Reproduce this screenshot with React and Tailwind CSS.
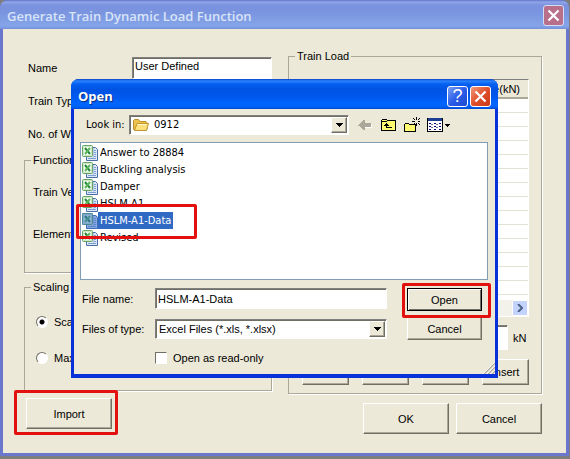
const files = ['Answer to 28884', 'Buckling analysis', 'Damper', 'HSLM-A1', 'HSLM-A1-Data', 'Revised']

const raised = 'border border-t-white border-l-white border-r-[#716f64] border-b-[#716f64] shadow-[inset_-1px_-1px_0_#aca899]'
const sunken = 'border border-t-[#808080] border-l-[#808080] border-r-white border-b-white bg-white shadow-[inset_1px_1px_0_#716f64]'

function ExcelIcon({ selected }) {
  return (
    <svg className="h-4 w-4 shrink-0" viewBox="0 0 16 16" aria-hidden="true">
      <path d="M4.5 2.5h9l2 2v11h-11z" fill="#dce8f8" stroke="#4a6ea8" />
      <path d="M12 5.500h2M12 7.500h2M12 9.500h2M12 11.500h2M6 13.500h8" stroke="#7f9fd2" />
      <path d="M11.500 3v10" stroke="#b4c9ea" />
      <rect x="0.5" y="0.5" width="10" height="11" rx="1" fill="#cfe8c8" stroke="#67a566" />
      <rect x="2" y="2" width="7" height="8" fill="#f4fbf1" />
      <path d="M3 3l5 6" stroke="#23883a" strokeWidth="2" />
      <path d="M8 3l-5 6" stroke="#5cb75f" strokeWidth="2" />
      {selected && <path d="M0 0h11v2h3l2 2v12H4v-4H0z" fill="#316ac5" fillOpacity="0.5" />}
    </svg>
  )
}

function FolderIcon() {
  return (
    <svg className="h-4 w-4" viewBox="0 0 16 16" aria-hidden="true">
      <path d="M.5 12.500v-9l1-1h4l1.500 2h6l1 1v7z" fill="#eec34c" stroke="#b98f2c" />
      <path d="M1.500 13.500L4 6.500h11.500l-2 7z" fill="#fddf7c" stroke="#c09530" />
      <path d="M4.500 7.500h9.500" stroke="#fff6c4" />
    </svg>
  )
}

function BackIcon() {
  return (
    <svg className="h-4 w-4" viewBox="0 0 16 16" shapeRendering="crispEdges" aria-hidden="true">
      <path d="M2 9h1v1h1v1h1v1h1v1h1v-2h7V7h-1v3H6v2H5v-1H4v-1H3V9z" fill="#fff" />
      <path d="M0 8h1V7h1V6h1V5h1V4h1V3h2v3h6v4H7v3H5v-1H4v-1H3v-1H2V9H0z" fill="#aca899" />
    </svg>
  )
}

function UpIcon() {
  return (
    <svg className="h-4 w-4" viewBox="0 0 16 16" shapeRendering="crispEdges" aria-hidden="true">
      <path d="M.5 13.500v-10l1-1h4l1 1h8v10z" fill="#fffa70" stroke="#000" />
      <path d="M1 4.500h5" stroke="#000" />
      <path d="M5 6h1v1h1v1h1v1H6v1h5v1H5V9H3V8h1V7h1z" fill="#000" />
    </svg>
  )
}

function NewFolderIcon() {
  return (
    <svg className="h-4 w-4" viewBox="0 0 16 16" shapeRendering="crispEdges" aria-hidden="true">
      <path d="M.5 14.500v-7l1-1h3l1 1h6v7z" fill="#fffa70" stroke="#000" />
      <path d="M12 0h1v3h-1zM12 6h1v3h-1zM8 4h3v1H8zM14 4h2v1h-2zM9 1h1v1H9zM10 2h1v1h-1zM15 1h1v1h-1zM14 2h1v1h-1zM14 6h1v1h-1zM15 7h1v1h-1zM10 6h1v1h-1z" fill="#000" />
    </svg>
  )
}

function ViewsIcon() {
  return (
    <svg className="h-4 w-6" viewBox="0 0 24 16" shapeRendering="crispEdges" aria-hidden="true">
      <path d="M.5 1.500h15v13H.5z" fill="#fff" stroke="#000" />
      <path d="M1 1h14v3H1z" fill="#1c3f94" />
      <path d="M2 6h2v1H2zM7 6h2v1H7zM12 6h2v1h-2zM2 9h2v1H2zM7 9h2v1H7zM12 9h2v1h-2zM2 12h2v1H2zM7 12h2v1H7zM12 12h2v1h-2z" fill="#000080" />
      <path d="M4 7h2v1H4zM9 7h2v1H9zM4 10h2v1H4zM9 10h2v1H9z" fill="#707090" />
      <path d="M18 7h5v1h-1v1h-1v1h-1V9h-1V8h-1z" fill="#000" />
    </svg>
  )
}

function CloseIcon() {
  return (
    <svg className="h-[19px] w-[19px]" viewBox="0 0 19 19" aria-hidden="true">
      <path d="M4.500 4.500l10 10M14.500 4.500l-10 10" stroke="#fff" strokeWidth="2.200" />
    </svg>
  )
}

function Highlight({ className }) {
  return <span className={`pointer-events-none absolute z-10 rounded-xs border-3 border-[#e31010] ${className}`} />
}

function Button({ children, className = '' }) {
  return (
    <button type="button" className={`bg-[#ece9d8] ${raised} ${className}`}>
      {children}
    </button>
  )
}

function Select({ id, value, icon, className = '' }) {
  return (
    <div className={`relative h-5 ${className}`}>
      {icon && <span className="pointer-events-none absolute top-0.5 left-1">{icon}</span>}
      <select id={id} className={`block h-5 w-full appearance-none rounded-none outline-none ${sunken} ${icon ? 'pl-6' : 'pl-[3px]'}`}>
        <option>{value}</option>
      </select>
      <span className={`pointer-events-none absolute top-0.5 right-0.5 flex h-4 w-4 items-center justify-center bg-[#ece9d8] ${raised}`}>
        <svg className="h-1 w-[7px]" viewBox="0 0 7 4" shapeRendering="crispEdges" aria-hidden="true">
          <path d="M0 0h7v1H6v1H5v1H4v1H3V3H2V2H1V1H0z" />
        </svg>
      </span>
    </div>
  )
}

function Group({ title, className = '', children }) {
  return (
    <fieldset className={`min-w-0 border border-[#aca899] shadow-[1px_1px_0_#fff] ${className}`}>
      <legend className="ml-1.5 h-3.5 bg-[#ece9d8] px-0.5 leading-[14px]">{title}</legend>
      {children}
    </fieldset>
  )
}

function Radio({ label, defaultChecked }) {
  return (
    <label className="flex h-3.5 items-center gap-1.5">
      <input
        type="radio"
        name="scaling"
        defaultChecked={defaultChecked}
        className="h-3 w-3 appearance-none rounded-full border border-t-[#716f64] border-r-white border-b-white border-l-[#716f64] bg-white checked:bg-[radial-gradient(circle,#000_2px,#fff_3px)]"
      />
      {label}
    </label>
  )
}

function TrainForm() {
  return (
    <div className="w-[248px] shrink-0 pt-2">
      <div className="flex flex-col gap-[11px] pl-1">
        <div className="flex h-[22px] items-center">
          <label htmlFor="name" className="w-[104px]">Name</label>
          <input id="name" defaultValue="User Defined" className={`h-[22px] min-w-0 flex-1 px-0.5 pb-1 outline-none ${sunken}`} />
        </div>
        <div className="flex h-[22px] items-center">
          <label htmlFor="type" className="w-[104px]">Train Type</label>
          <input id="type" className={`h-5 min-w-0 flex-1 ${sunken}`} />
        </div>
        <div className="flex h-[22px] items-center">
          <label htmlFor="wheels" className="w-[104px]">No. of Wheels</label>
          <input id="wheels" className={`h-5 min-w-0 flex-1 ${sunken}`} />
        </div>
      </div>
      <Group title="Function" className="mt-2 pb-[27px]">
        <div className="flex flex-col gap-5 pt-3.5 pr-3 pl-2">
          <div className="flex h-[22px] items-center">
            <label htmlFor="velocity" className="w-[100px]">Train Velocity</label>
            <input id="velocity" className={`h-5 min-w-0 flex-1 ${sunken}`} />
          </div>
          <div className="flex h-[22px] items-center">
            <label htmlFor="element" className="w-[100px]">Element</label>
            <input id="element" className={`h-5 min-w-0 flex-1 ${sunken}`} />
          </div>
        </div>
      </Group>
      <Group title="Scaling" className="mt-[7px] pb-[25px]">
        <div className="flex flex-col gap-[22px] pt-[21px] pl-[11px]">
          <Radio label="Scale" defaultChecked />
          <Radio label="Max." />
        </div>
      </Group>
      <div className="relative mt-[7px] ml-0.5 w-[86px]">
        <Button className="h-[31px] w-full">Import</Button>
        <Highlight className="-top-2 -right-1.5 -bottom-1.5 -left-3" />
      </div>
    </div>
  )
}

function LoadTable() {
  return (
    <div className="flex h-[238px] flex-col border border-t-[#808080] border-r-white border-b-white border-l-[#808080] bg-white">
      <table className="w-full table-fixed border-collapse">
        <thead>
          <tr className="h-[18px] border-b-2 border-[#aca899] bg-[#ece9d8]">
            <th className="w-[50px] font-normal">No</th>
            <th className="font-normal">Distance(m)</th>
            <th className="w-[70px] pr-2 text-right font-normal">Force(kN)</th>
          </tr>
        </thead>
        <tbody>
          {Array.from({ length: 14 }, (_, i) => (
            <tr key={i} className="h-3.5 border-b border-[#e4e2d4]">
              <td />
              <td />
              <td />
            </tr>
          ))}
        </tbody>
      </table>
      <div className="mt-auto flex h-4 justify-end bg-[#f3f2ea]">
        <button type="button" aria-label="Scroll right" className="flex h-4 w-4 items-center justify-center rounded-xs border border-white bg-[#c2d3fc]">
          <svg className="h-2 w-1.5" viewBox="0 0 6 8" aria-hidden="true">
            <path d="M1 0l4 4-4 4" fill="none" stroke="#4d6185" strokeWidth="2" />
          </svg>
        </button>
      </div>
    </div>
  )
}

function OpenDialog() {
  return (
    <div role="dialog" aria-label="Open" className="absolute top-[79px] right-[72px] left-[71px] overflow-hidden rounded-t-lg bg-[#0831d9]">
      <div className="flex h-[30px] items-center gap-0.5 bg-[linear-gradient(#0842c4,#2a84ff_2px,#0560f0_5px,#0054e3_10px,#0058ee_18px,#0066ff_25px,#0060f8_28px,#0048d0)] pt-1 pr-[7px] pl-[7px]">
        <h2 className="flex-1 font-['Open_Sans',sans-serif] text-[13px] font-bold text-white [text-shadow:1px_1px_0_#0a2a80]">Open</h2>
        <button type="button" aria-label="Help" className="flex h-[21px] w-[21px] items-center justify-center rounded-[3px] border border-white bg-[linear-gradient(135deg,#7aa0f6,#2a5de8_50%,#1c48d0)] font-['Liberation_Sans',sans-serif] text-[18px] leading-none text-white">?</button>
        <button type="button" aria-label="Close" className="h-[21px] w-[21px] rounded-[3px] border border-white bg-[linear-gradient(135deg,#f0987c,#e0502c_50%,#c8381a)]">
          <CloseIcon />
        </button>
      </div>
      <div className="relative mx-[3px] mb-1 bg-[#ece9d8] pt-1.5 pr-[7px] pb-[9px] pl-1.5">
        <div className="flex items-center">
          <label htmlFor="look" className="w-[49px] pl-1.5 font-['DejaVu_Sans_Condensed','DejaVu_Sans',sans-serif]">Look in:</label>
          <Select id="look" value="0912" icon={<FolderIcon />} className="flex-1 font-['DejaVu_Sans_Condensed','DejaVu_Sans',sans-serif]" />
          <div className="mr-[37px] ml-[9px] flex gap-[7px]">
            <button type="button" aria-label="Back"><BackIcon /></button>
            <button type="button" aria-label="Up one level"><UpIcon /></button>
            <button type="button" aria-label="New folder"><NewFolderIcon /></button>
            <button type="button" aria-label="Views"><ViewsIcon /></button>
          </div>
        </div>
        <ul className="mt-[7px] min-h-[138px] border border-[#7f9db9] bg-white px-px pt-px font-['DejaVu_Sans_Condensed','DejaVu_Sans',sans-serif]">
          {files.map((file) => {
            const selected = file === 'HSLM-A1-Data'
            return (
              <li key={file} className="relative">
                <button type="button" className="flex h-[17px] items-center">
                  <ExcelIcon selected={selected} />
                  <span className={`px-0.5 leading-[17px] ${selected ? 'bg-[#316ac5] text-white' : ''}`}>{file}</span>
                </button>
                {selected && <Highlight className="-top-2 -left-1.5 h-[35px] w-[121px]" />}
              </li>
            )
          })}
        </ul>
        <div className="mt-2 flex justify-between gap-5 pr-1.5">
          <div className="min-w-0 flex-1 pl-0.5">
            <div className="flex items-center">
              <label htmlFor="filename" className="w-[73px] shrink-0">File name:</label>
              <input id="filename" defaultValue="HSLM-A1-Data" className={`h-[21px] min-w-0 flex-1 px-0.5 outline-none ${sunken}`} />
            </div>
            <div className="mt-2.5 flex items-center">
              <label htmlFor="filetype" className="w-[73px] shrink-0">Files of type:</label>
              <Select id="filetype" value="Excel Files (*.xls, *.xlsx)" className="flex-1" />
            </div>
            <label className="mt-3 ml-[73px] flex items-center gap-1.5">
              <input type="checkbox" className="h-3 w-3 appearance-none border border-t-[#716f64] border-r-white border-b-white border-l-[#716f64] bg-white checked:bg-black" />
              Open as read-only
            </label>
          </div>
          <div className="flex w-[75px] flex-col gap-1.5">
            <div className="relative">
              <button type="button" className="block h-[23px] w-full border border-black bg-[#ece9d8] shadow-[inset_1px_1px_0_#fff,inset_-1px_-1px_0_#716f64]">Open</button>
              <Highlight className="-top-[5px] -right-[9px] -bottom-[7px] -left-[5px]" />
            </div>
            <Button className="h-[23px] w-full">Cancel</Button>
          </div>
        </div>
        <svg className="absolute right-0 bottom-0 h-3 w-3" viewBox="0 0 12 12" aria-hidden="true">
          <path d="M1 12L12 1M5 12l7-7M9 12l3-3" stroke="#aca899" strokeWidth="1.500" />
          <path d="M0 12L12 0M4 12l8-8M8 12l4-4" stroke="#fff" strokeWidth="0.800" />
        </svg>
      </div>
    </div>
  )
}

export default function App() {
  return (
    <div className="relative bg-[#7d7d7d] pb-[3px] font-['Liberation_Sans',sans-serif] text-[11px] leading-[14px] text-black">
      <main className="mr-px overflow-hidden rounded-t-lg bg-[#6b77cc]">
        <div className="flex h-[29px] items-center bg-[linear-gradient(#6274c8,#8fa6ea_2px,#7c92de_5px,#7a94df_12px,#82a0e6_22px,#84a4ea_26px,#7490d8)] pt-0.5 pr-[5px] pl-[7px]">
          <h1 className="flex-1 font-['Open_Sans',sans-serif] text-[13px] font-semibold text-[#d8e4f8]">Generate Train Dynamic Load Function</h1>
          <button type="button" aria-label="Close window" className="h-[21px] w-[21px] rounded-[3px] border border-[#d5dcf5] bg-[#b8708a]">
            <CloseIcon />
          </button>
        </div>
        <div className="mx-[3px] mb-[3px] flex gap-4 bg-[#ece9d8] pt-5 pr-6 pb-[19px] pl-[21px]">
          <TrainForm />
          <div className="min-w-0 flex-1">
            <Group title="Train Load" className="pb-2">
              <div className="pt-4 pr-3 pl-[9px]">
                <LoadTable />
                <div className="mt-2 flex items-center gap-[5px] pl-1">
                  <label htmlFor="load" className="flex-1">Load</label>
                  <input id="load" className={`h-[25px] w-20 ${sunken}`} />
                  <span className="w-4">kN</span>
                </div>
                <div className="mt-[9px] flex justify-between pl-1">
                  <Button className="h-[26px] w-[47px]">Add</Button>
                  <Button className="h-[26px] w-[47px]">Modify</Button>
                  <Button className="h-[26px] w-[47px]">Delete</Button>
                  <Button className="h-[26px] w-[47px]">Insert</Button>
                </div>
              </div>
            </Group>
            <div className="mt-[9px] flex justify-end gap-[7px]">
              <Button className="h-[31px] w-[86px]">OK</Button>
              <Button className="h-[31px] w-[86px]">Cancel</Button>
            </div>
          </div>
        </div>
      </main>
      <OpenDialog />
    </div>
  )
}
